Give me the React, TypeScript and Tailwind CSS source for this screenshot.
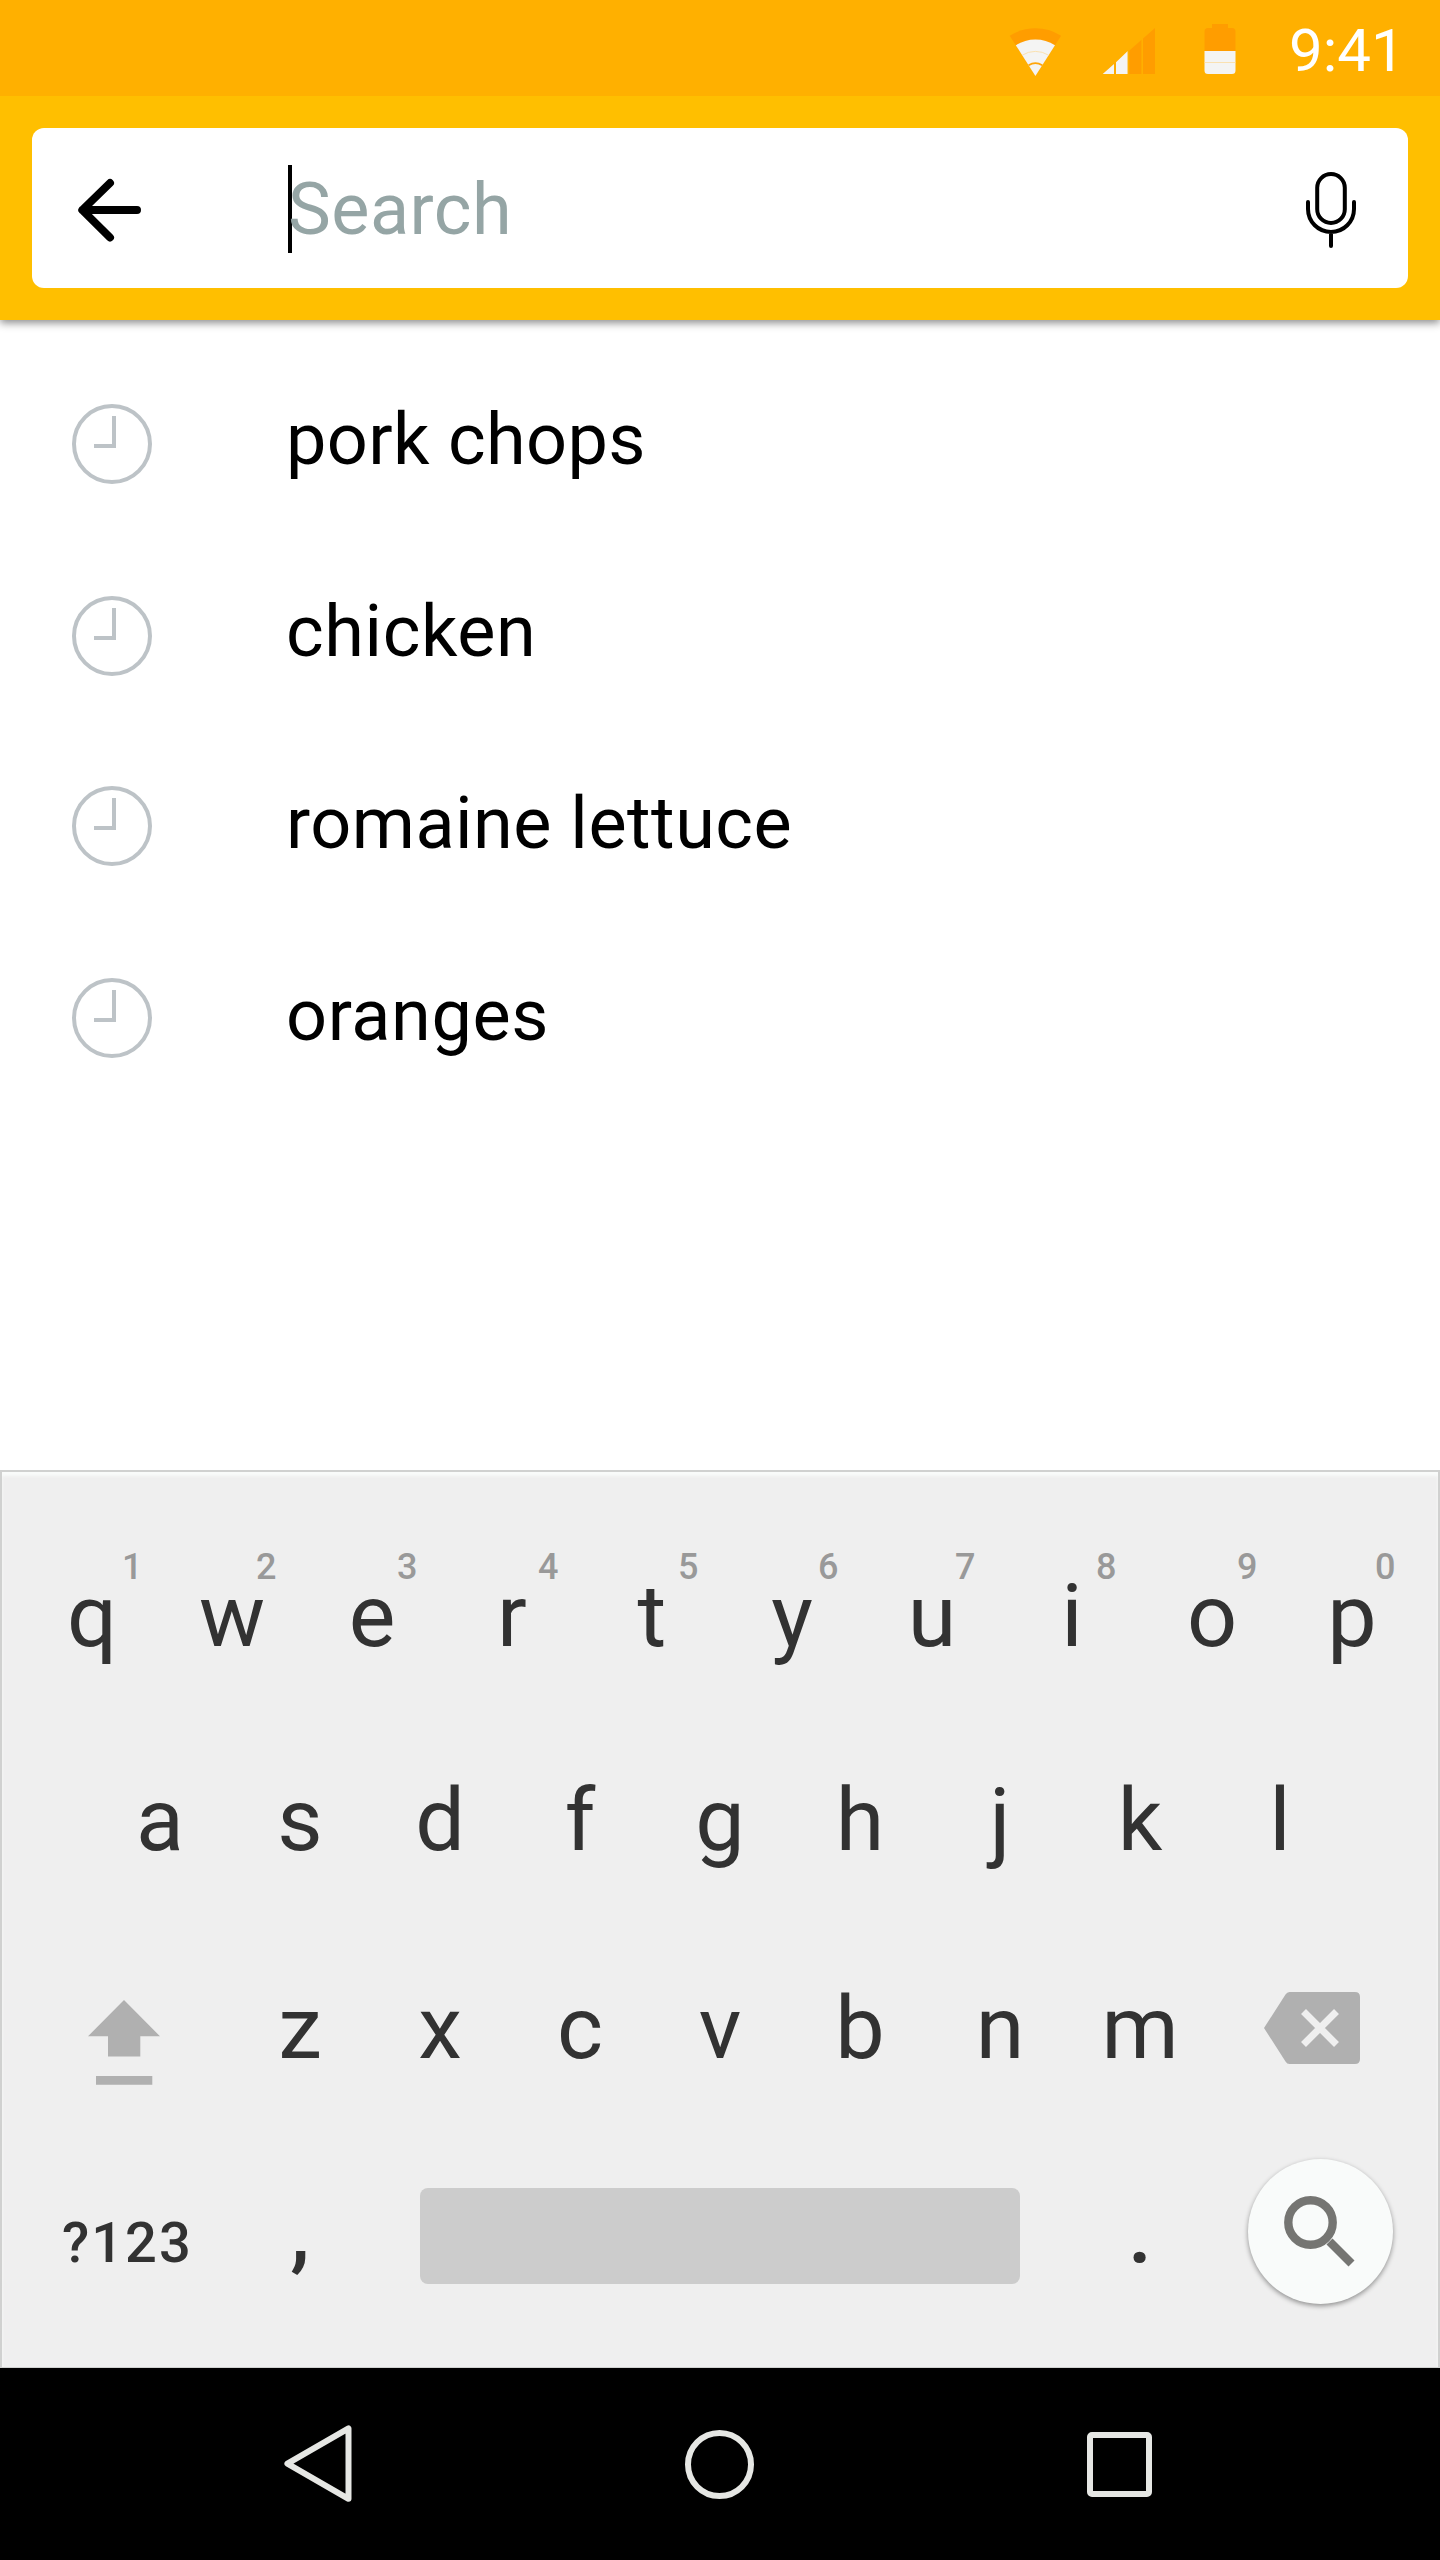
const topKeys = [
  { key: "q", hint: "1", at: 100 },
  { key: "w", hint: "2", at: 94 },
  { key: "e", hint: "3", at: 95 },
  { key: "r", hint: "4", at: 96 },
  { key: "t", hint: "5", at: 96 },
  { key: "y", hint: "6", at: 96 },
  { key: "u", hint: "7", at: 93 },
  { key: "i", hint: "8", at: 94 },
  { key: "o", hint: "9", at: 95 },
  { key: "p", hint: "0", at: 93 },
];
const homeKeys = ["a", "s", "d", "f", "g", "h", "j", "k", "l"];
const bottomKeys = ["z", "x", "c", "v", "b", "n", "m"];

const recent = [
  { text: "pork chops", iconNudge: "mt-2", tracking: "tracking-[0.35px]" },
  { text: "chicken", iconNudge: "mt-2", tracking: "tracking-[0.6px]" },
  { text: "romaine lettuce", iconNudge: "mt-1", tracking: "tracking-[0.5px]" },
  { text: "oranges", iconNudge: "mt-1", tracking: "tracking-[0.6px]" },
];

function StatusBar() {
  return (
    <div className="relative z-20 flex h-24 shrink-0 items-start justify-end bg-[#ffb000] pr-[35px]">
      <svg className="mt-6 shrink-0" width="228" height="56" viewBox="1008 24 228 56">
        <path d="M1035.4 76 L1009.7 35.8 A47.8 47.8 0 0 1 1061.1 35.8 Z" fill="#ff9d00" />
        <path d="M1035.4 76 L1015.8 45.2 A36.6 36.6 0 0 1 1055 45.2 Z" fill="#f4f4f3" />
        <path d="M1022.2 55.2 A24.7 24.7 0 0 1 1048.6 55.2" fill="none" stroke="#fbdca0" strokeWidth="0.8" />
        <path d="M1028.6 65.3 A12.7 12.7 0 0 1 1042.2 65.3" fill="none" stroke="#ffa50a" strokeWidth="1.8" />
        <path d="M1102.7 74 L1155 28 V74 Z" fill="#ff9d00" />
        <path d="M1102.7 74 L1114 64 V74 Z M1116 74 V62.3 L1127.8 51 V74 Z" fill="#f4f4f3" />
        <path d="M1115 60 V74 M1128.5 48 V74 M1142.2 36 V74" stroke="#ffb000" strokeWidth="1.6" />
        <path d="M1212 24 H1228 V28 H1232 A3.5 3.5 0 0 1 1235.5 31.5 V51 H1204.5 V31.5 A3.5 3.5 0 0 1 1208 28 H1212 Z" fill="#ff9d00" />
        <path d="M1204.5 51 H1235.5 V70.5 A3.5 3.5 0 0 1 1232 74 H1208 A3.5 3.5 0 0 1 1204.5 70.5 Z" fill="#f4f4f3" />
        <path d="M1204.5 62.5 H1235.5" stroke="#fbdca0" strokeWidth="0.8" />
      </svg>
      <span className="ml-[53px] mt-4 w-[116px] text-[60px] leading-[70px] text-white">9:41</span>
    </div>
  );
}

function SearchHeader() {
  return (
    <header className="relative z-10 h-56 shrink-0 bg-[#ffbf00] p-8 shadow-[0_3px_8px_rgba(0,0,0,0.45)]">
      <div className="flex h-40 items-center rounded-xl bg-white pl-[44px] pr-[50px]">
        <svg className="mt-1 shrink-0" width="68" height="68" viewBox="76 176 68 68" fill="none" stroke="#000" strokeWidth="8" strokeLinecap="round" strokeLinejoin="round">
          <path d="M137 210 H82.5 M110 183 L82.3 210 L110 237.5" />
        </svg>
        <div className="ml-36 mt-[2px] flex items-center">
          <span className="h-[88px] w-1 bg-black" />
          <span className="-ml-1 mt-[1px] text-[72px] leading-[88px] tracking-[0.5px] text-[#95a5a5]">Search</span>
        </div>
        <svg className="ml-auto mt-1 shrink-0" width="54" height="80" viewBox="1304 170 54 80" fill="none" stroke="#000" strokeWidth="4" strokeLinecap="round">
          <rect x="1317.2" y="174" width="27.6" height="49" rx="13.8" />
          <path d="M1308 202 V209 A23 23 0 0 0 1354 209 V202 M1331 232 V246" />
        </svg>
      </div>
    </header>
  );
}

function RecentSearches() {
  return (
    <ul className="flex-1 bg-white pt-6">
      {recent.map((item) => (
        <li key={item.text} className="flex h-48 items-center pl-18">
          <svg className={"shrink-0 " + item.iconNudge} width="80" height="80" viewBox="0 0 80 80" fill="none" stroke="#bdc3c7" strokeWidth="4">
            <circle cx="40" cy="40" r="38" />
            <path d="M42 12 V42 H22" />
          </svg>
          <span className={"ml-[134px] text-[72px] leading-[96px] text-black " + item.tracking}>{item.text}</span>
        </li>
      ))}
    </ul>
  );
}

function Key({ label }: { label: string }) {
  return <span className="flex w-35 items-center justify-center text-[88px] leading-[104px]">{label}</span>;
}

function Keyboard() {
  return (
    <section className="h-[898px] shrink-0 border-x-2 border-t-2 border-b border-[#d0d1d0] bg-[#efefef] pt-[42px] text-[#323232] shadow-[inset_0_4px_3px_#f9fbfa]">
      <div className="flex h-51 pl-5">
        {topKeys.map((k) => (
          <div key={k.key} className="relative flex w-35 items-center justify-center">
            <span className="text-[88px] leading-[104px]">{k.key}</span>
            <span className="absolute top-[32px] text-[36px] font-medium leading-[42px] text-[#999]" style={{ left: k.at }}>
              {k.hint}
            </span>
          </div>
        ))}
      </div>
      <div className="flex h-51 pl-22">
        {homeKeys.map((k) => (
          <Key key={k} label={k} />
        ))}
      </div>
      <div className="flex h-53 items-center pl-[84px]">
        <svg className="mt-[30px] shrink-0" width="76" height="90" viewBox="86 1998 76 90" fill="#b0b0b0">
          <path d="M124 2000 L160 2036.3 H140.3 V2056.5 H108 V2036.3 H88 Z M96 2076 H152.3 V2084.8 H96 Z" />
        </svg>
        <div className="ml-17 flex">
          {bottomKeys.map((k) => (
            <Key key={k} label={k} />
          ))}
        </div>
        <svg className="ml-[52px] shrink-0" width="100" height="76" viewBox="1262 1990 100 76">
          <path d="M1289.5 1992 H1355 Q1360 1992 1360 1997 V2059 Q1360 2064 1355 2064 H1289.5 Q1287 2064 1285.5 2061.5 L1264 2028 L1285.5 1994.5 Q1287 1992 1289.5 1992 Z" fill="#b0b0b0" />
          <path d="M1303.5 2011.5 L1336.5 2044.5 M1336.5 2011.5 L1303.5 2044.5" stroke="#efefef" strokeWidth="7" />
        </svg>
      </div>
      <div className="flex h-51 items-center">
        <span className="ml-[60px] mt-[14px] w-[130px] whitespace-nowrap text-[56px] font-medium leading-[64px] tracking-[2px]">?123</span>
        <span className="ml-[38px] mt-[-11px] w-35 text-center text-[88px] font-medium leading-[104px]">,</span>
        <span className="ml-[50px] h-24 w-150 rounded-lg bg-[#ccc]" />
        <span className="ml-[50px] mt-[-9px] w-35 text-center text-[88px] font-medium leading-[104px]">.</span>
        <span className="ml-[37.5px] mt-[-10px] flex size-[145px] items-center justify-center rounded-full bg-[#f9fbfa] shadow-[0_2px_5px_rgba(0,0,0,0.4)]">
          <svg width="145" height="145" viewBox="1247.5 2158.5 145 145" fill="none" stroke="#757572">
            <circle cx="1310" cy="2222" r="22.2" strokeWidth="8.4" />
            <path d="M1329 2241 L1351 2263" strokeWidth="8.5" />
          </svg>
        </span>
      </div>
    </section>
  );
}

function NavBar() {
  return (
    <nav className="flex h-48 shrink-0 items-center bg-black pl-[280px]">
      <svg className="shrink-0" width="76" height="84" viewBox="280 2422 76 84" fill="none" stroke="#e6e7e4" strokeWidth="6" strokeLinejoin="round">
        <path d="M287.4 2463.6 L348.5 2428.4 V2498.8 Z" />
      </svg>
      <span className="ml-[329px] mt-[1px] size-[69px] rounded-full border-[6px] border-[#e6e7e4]" />
      <span className="ml-[333px] mt-[1px] size-[65px] rounded-[5px] border-[6px] border-[#e6e7e4]" />
    </nav>
  );
}

export default function App() {
  return (
    <main className="flex h-[2560px] w-[1440px] flex-col overflow-hidden bg-white font-['Roboto',sans-serif]">
      <StatusBar />
      <SearchHeader />
      <RecentSearches />
      <Keyboard />
      <NavBar />
    </main>
  );
}
